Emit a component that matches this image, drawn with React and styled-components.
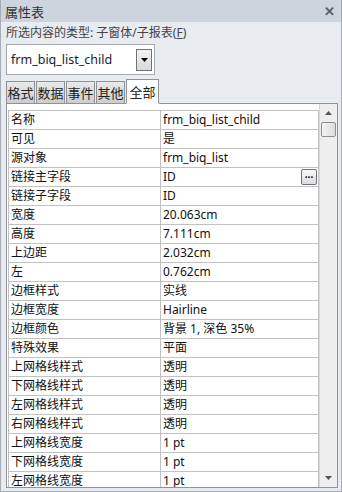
import React from "react";
import styled, { createGlobalStyle } from "styled-components";

const Global = createGlobalStyle`
  html, body { margin: 0; padding: 0; background: #e8ebf0; }
  * { box-sizing: border-box; }
`;

const FONT = `"Noto Sans", "Noto Sans CJK SC", sans-serif`;

const Window = styled.div`
  width: 342px;
  height: 492px;
  background: #e8ebf0;
  border: 1px solid #a7adb6;
  border-top: none;
  display: flex;
  flex-direction: column;
  font-family: ${FONT};
  color: #1e1e1e;
  overflow: hidden;
`;

const TitleBar = styled.div`
  height: 22px;
  background: #cdd4dd;
  display: flex;
  align-items: center;
  justify-content: space-between;
  padding: 0 6px 0 4px;
  font-size: 13px;
  color: #333;
  flex: none;
`;

const Close = styled.span`
  font-size: 13px;
  font-weight: bold;
  color: #5a5f66;
  line-height: 1;
`;

const TypeLabel = styled.div`
  height: 20px;
  padding: 0 0 0 5px;
  display: flex;
  align-items: center;
  font-size: 12px;
  color: #444;
  flex: none;
  u { text-decoration: underline; }
`;

const Combo = styled.div`
  margin: 2px 0 0 5px;
  width: 149px;
  height: 31px;
  background: #fff;
  border: 1px solid #a4a8ad;
  display: flex;
  align-items: center;
  padding: 0 2px 0 4px;
  justify-content: space-between;
  flex: none;
  font-size: 12.5px;
  color: #1a1a3a;
`;

const ComboButton = styled.div`
  width: 16px;
  height: 22px;
  border: 1px solid #6f7276;
  background: linear-gradient(#f4f4f4, #d8d8d8);
  display: flex;
  align-items: center;
  justify-content: center;
`;

const Tabs = styled.div`
  display: flex;
  align-items: flex-end;
  gap: 1px;
  padding-left: 5px;
  margin-top: 3px;
  height: 25px;
  flex: none;
  position: relative;
  z-index: 1;
`;

const Tab = styled.div`
  height: ${(p) => (p.$active ? "25px" : "22px")};
  width: ${(p) => (p.$active ? "33px" : "29px")};
  background: ${(p) => (p.$active ? "#fff" : "linear-gradient(#e9e9e9, #cdcdcd)")};
  border: 1px solid #8f9399;
  border-bottom: ${(p) => (p.$active ? "1px solid #fff" : "none")};
  font-size: 13px;
  display: flex;
  align-items: center;
  justify-content: center;
  color: #222;
  margin-bottom: ${(p) => (p.$active ? "-1px" : "0")};
`;

const Panel = styled.div`
  flex: 1;
  margin: 0 3px 3px 5px;
  background: #fff;
  border: 1px solid #8f9399;
  display: flex;
  padding: 6px 0 0 1px;
  overflow: hidden;
`;

const Grid = styled.div`
  flex: 1;
  display: grid;
  grid-template-columns: 152px 1fr;
  align-content: start;
  border-top: 1px solid #c2c2c2;
  border-left: 1px solid #c2c2c2;
  overflow: hidden;
`;

const Cell = styled.div`
  height: 19px;
  border-right: 1px solid #c2c2c2;
  border-bottom: 1px solid #c2c2c2;
  font-size: 12px;
  line-height: 18px;
  padding-left: 2px;
  white-space: nowrap;
  overflow: hidden;
  display: flex;
  align-items: center;
  justify-content: space-between;
  color: #111;
`;

const Dots = styled.div`
  width: 16px;
  height: 16px;
  border: 1px solid #6f7276;
  border-radius: 2px;
  background: linear-gradient(#fafafa, #dcdcdc);
  font-size: 10px;
  font-weight: bold;
  line-height: 8px;
  text-align: center;
  margin-right: 1px;
  color: #000;
`;

const Scrollbar = styled.div`
  width: 18px;
  margin-top: -6px;
  background: #eeeeee;
  border-left: 1px solid #d8d8d8;
  display: flex;
  flex-direction: column;
  align-items: center;
  flex: none;
`;

const Arrow = styled.div`
  height: 18px;
  display: flex;
  align-items: center;
  justify-content: center;
`;

const Thumb = styled.div`
  width: 15px;
  height: 15px;
  border: 1px solid #8e8e8e;
  border-radius: 2px;
  background: linear-gradient(90deg, #f3f3f3, #dedede);
`;

const Spacer = styled.div`
  flex: 1;
`;

const rows = [
  ["名称", "frm_biq_list_child"],
  ["可见", "是"],
  ["源对象", "frm_biq_list"],
  ["链接主字段", "ID", true],
  ["链接子字段", "ID"],
  ["宽度", "20.063cm"],
  ["高度", "7.111cm"],
  ["上边距", "2.032cm"],
  ["左", "0.762cm"],
  ["边框样式", "实线"],
  ["边框宽度", "Hairline"],
  ["边框颜色", "背景 1, 深色 35%"],
  ["特殊效果", "平面"],
  ["上网格线样式", "透明"],
  ["下网格线样式", "透明"],
  ["左网格线样式", "透明"],
  ["右网格线样式", "透明"],
  ["上网格线宽度", "1 pt"],
  ["下网格线宽度", "1 pt"],
  ["左网格线宽度", "1 pt"],
];

const Tri = ({ up, color = "#333" }) => (
  <svg width="7" height="4" viewBox="0 0 7 4">
    <polygon points={up ? "0,4 7,4 3.5,0" : "0,0 7,0 3.5,4"} fill={color} />
  </svg>
);

export default function App() {
  return (
    <>
      <Global />
      <Window>
        <TitleBar>
          <span>属性表</span>
          <Close>✕</Close>
        </TitleBar>
        <TypeLabel>
          所选内容的类型:&nbsp;子窗体/子报表(<u>F</u>)
        </TypeLabel>
        <Combo>
          <span>frm_biq_list_child</span>
          <ComboButton>
            <Tri color="#000" />
          </ComboButton>
        </Combo>
        <Tabs>
          <Tab>格式</Tab>
          <Tab>数据</Tab>
          <Tab>事件</Tab>
          <Tab>其他</Tab>
          <Tab $active>全部</Tab>
        </Tabs>
        <Panel>
          <Grid>
            {rows.map(([k, v, btn]) => (
              <React.Fragment key={k}>
                <Cell>{k}</Cell>
                <Cell>
                  <span>{v}</span>
                  {btn && <Dots>...</Dots>}
                </Cell>
              </React.Fragment>
            ))}
          </Grid>
          <Scrollbar>
            <Arrow>
              <Tri up color="#555" />
            </Arrow>
            <Thumb />
            <Spacer />
            <Arrow>
              <Tri color="#555" />
            </Arrow>
          </Scrollbar>
        </Panel>
      </Window>
    </>
  );
}
